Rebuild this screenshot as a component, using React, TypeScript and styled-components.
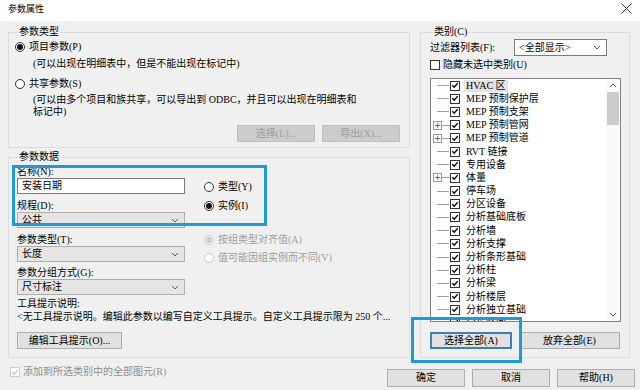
import styled, { createGlobalStyle } from 'styled-components'

const GlobalStyle = createGlobalStyle`
  html, body {
    margin: 0;
    padding: 0;
    background: #f0f0f0;
  }
  body {
    font-family: 'Liberation Serif', 'Noto Sans CJK SC', serif;
    font-size: 10px;
    line-height: 12px;
    color: #000;
  }
  * {
    box-sizing: border-box;
  }
`

interface TreeItem {
  label: string
  expand?: boolean
  selected?: boolean
}

const treeItems: TreeItem[] = [
  { label: 'HVAC 区', selected: true },
  { label: 'MEP 预制保护层' },
  { label: 'MEP 预制支架' },
  { label: 'MEP 预制管网', expand: true },
  { label: 'MEP 预制管道', expand: true },
  { label: 'RVT 链接' },
  { label: '专用设备' },
  { label: '体量', expand: true },
  { label: '停车场' },
  { label: '分区设备' },
  { label: '分析基础底板' },
  { label: '分析墙' },
  { label: '分析支撑' },
  { label: '分析条形基础' },
  { label: '分析柱' },
  { label: '分析梁' },
  { label: '分析楼层' },
  { label: '分析独立基础' },
  { label: '分析空间' },
]

const Chevron = ({ up }: { up?: boolean }) => (
  <svg width="8" height="5" viewBox="0 0 8 5">
    <polyline
      points={up ? '1,4 4,1 7,4' : '1,1 4,4 7,1'}
      fill="none"
      stroke="#606060"
      strokeWidth="1"
    />
  </svg>
)

const CheckMark = ({ color = '#000' }: { color?: string }) => (
  <svg width="9" height="9" viewBox="0 0 9 9">
    <polyline points="1.5,4.2 3.6,6.4 7.6,1.8" fill="none" stroke={color} strokeWidth="1.6" />
  </svg>
)

const Check = ({ checked, disabled }: { checked?: boolean; disabled?: boolean }) => (
  <CheckBox $disabled={disabled}>
    {checked && <CheckMark color={disabled ? '#c4c4c4' : '#000'} />}
  </CheckBox>
)

const Select = ({ value, white, width }: { value: string; white?: boolean; width?: number }) => (
  <SelectBox $white={white} style={width ? { width } : undefined}>
    <span>{value}</span>
    <Chevron />
  </SelectBox>
)

const App = () => (
  <Window>
    <GlobalStyle />
    <TitleBar>
      <Title>参数属性</Title>
      <svg width="11" height="11" viewBox="0 0 11 11">
        <path d="M0.5 0.5 L10.5 10.5 M10.5 0.5 L0.5 10.5" stroke="#333" strokeWidth="1" />
      </svg>
    </TitleBar>

    <Body>
      <LeftCol>
        <Group>
          <Legend>参数类型</Legend>
          <RadioRow $top={2}>
            <Radio $checked />
            项目参数(P)
          </RadioRow>
          <Note $top={4}>(可以出现在明细表中，但是不能出现在标记中)</Note>
          <RadioRow $top={7}>
            <Radio />
            共享参数(S)
          </RadioRow>
          <Note $top={3}>
            (可以由多个项目和族共享，可以导出到 ODBC，并且可以出现在明细表和
            <br />
            标记中)
          </Note>
          <ButtonRow>
            <Button disabled>选择(L)...</Button>
            <Button disabled>导出(X)...</Button>
          </ButtonRow>
        </Group>

        <DataGroup>
          <Legend>参数数据</Legend>
          <DataBody>
            <DataGrid>
              <Fields>
                <FieldBlock $top={3}>
                  <span>名称(N):</span>
                  <TextInput>安装日期</TextInput>
                </FieldBlock>
                <FieldBlock $top={6}>
                  <span>规程(D):</span>
                  <Select value="公共" />
                </FieldBlock>
                <FieldBlock $top={6}>
                  <span>参数类型(T):</span>
                  <Select value="长度" />
                </FieldBlock>
                <FieldBlock $top={5}>
                  <span>参数分组方式(G):</span>
                  <Select value="尺寸标注" />
                </FieldBlock>
              </Fields>
              <Options>
                <RadioRow $top={17}>
                  <Radio />
                  类型(Y)
                </RadioRow>
                <RadioRow $top={5}>
                  <Radio $checked />
                  实例(I)
                </RadioRow>
                <RadioRow $top={20} $disabled>
                  <Radio $checked $disabled />
                  按组类型对齐值(A)
                </RadioRow>
                <RadioRow $top={4} $disabled>
                  <Radio $disabled />
                  值可能因组实例而不同(V)
                </RadioRow>
              </Options>
            </DataGrid>
            <TipLabel>工具提示说明:</TipLabel>
            <TipText>
              &lt;无工具提示说明。编辑此参数以编写自定义工具提示。自定义工具提示限为 250 个...
            </TipText>
            <Button $width={105}>编辑工具提示(O)...</Button>
          </DataBody>
        </DataGroup>
      </LeftCol>

      <CategoryGroup>
        <Legend>类别(C)</Legend>
        <FilterRow>
          <span>过滤器列表(F):</span>
          <Select value="<全部显示>" white width={93} />
        </FilterRow>
        <CheckRow $top={3}>
          <Check />
          隐藏未选中类别(U)
        </CheckRow>
        <TreeBox>
          <TreeList>
            {treeItems.map((item) => (
              <TreeRow key={item.label}>
                <Connector>
                  {item.expand ? (
                    <>
                      <Expander>+</Expander>
                      <Line $width={8} />
                    </>
                  ) : (
                    <Line $width={12} $left={4} />
                  )}
                </Connector>
                <Check checked />
                <TreeLabel $selected={item.selected}>{item.label}</TreeLabel>
              </TreeRow>
            ))}
          </TreeList>
          <ScrollBar>
            <ScrollArrow>
              <Chevron up />
            </ScrollArrow>
            <Thumb />
            <Track />
            <ScrollArrow>
              <Chevron />
            </ScrollArrow>
          </ScrollBar>
        </TreeBox>
        <ListButtons>
          <Button $width={82} $focused>
            选择全部(A)
          </Button>
          <Button $width={101}>放弃全部(E)</Button>
        </ListButtons>
      </CategoryGroup>
    </Body>

    <Footer>
      <CheckRow $top={0} $disabled>
        <Check checked disabled />
        添加到所选类别中的全部图元(R)
      </CheckRow>
      <FooterButtons>
        <Button $width={78} $height={18}>
          确定
        </Button>
        <Button $width={78} $height={18}>
          取消
        </Button>
        <Button $width={78} $height={18}>
          帮助(H)
        </Button>
      </FooterButtons>
    </Footer>

    <Highlight style={{ left: 12, top: 165, width: 255, height: 61 }} />
    <Highlight style={{ left: 411, top: 317, width: 111, height: 46 }} />
  </Window>
)

const Window = styled.div`
  position: relative;
  width: 640px;
  height: 390px;
  overflow: hidden;
  display: flex;
  flex-direction: column;
  background: #f0f0f0;
`

const TitleBar = styled.div`
  height: 21px;
  flex: none;
  display: flex;
  align-items: center;
  justify-content: space-between;
  padding: 0 8px 4px 8px;
  background: #fff;
`

const Title = styled.span`
  font-family: 'Noto Sans CJK SC', sans-serif;
  font-size: 9px;
  color: #000;
`

const Body = styled.div`
  height: 337px;
  flex: none;
  display: flex;
  gap: 10px;
  padding: 5px 10px 0 8px;
`

const LeftCol = styled.div`
  width: 402px;
  display: flex;
  flex-direction: column;
  gap: 3px;
`

const Group = styled.fieldset`
  margin: 0;
  min-width: 0;
  padding: 0 9px 5px 6px;
  border: 1px solid #dcdcdc;
`

const DataGroup = styled(Group)`
  flex: 1;
  padding-bottom: 6px;
`

const CategoryGroup = styled(Group)`
  flex: 1;
  padding: 0 8px 8px 9px;
`

const Legend = styled.legend`
  padding: 0 1px;
  margin-left: 3px;
  line-height: 12px;
`

const RadioRow = styled.div<{ $top: number; $disabled?: boolean }>`
  display: flex;
  align-items: center;
  gap: 4px;
  height: 14px;
  margin-top: ${({ $top }) => $top}px;
  color: ${({ $disabled }) => ($disabled ? '#9d9d9d' : '#000')};
  white-space: nowrap;
`

const Radio = styled.span<{ $checked?: boolean; $disabled?: boolean }>`
  flex: none;
  width: 10px;
  height: 10px;
  border-radius: 50%;
  border: 1px solid ${({ $disabled }) => ($disabled ? '#cbcbcb' : '#333')};
  background: #fff;
  display: flex;
  align-items: center;
  justify-content: center;
  &::after {
    content: '';
    width: 6px;
    height: 6px;
    border-radius: 50%;
    background: ${({ $disabled }) => ($disabled ? '#cbcbcb' : '#111')};
    display: ${({ $checked }) => ($checked ? 'block' : 'none')};
  }
`

const Note = styled.div<{ $top: number }>`
  padding-left: 18px;
  margin-top: ${({ $top }) => $top}px;
  white-space: nowrap;
`

const ButtonRow = styled.div`
  display: flex;
  justify-content: flex-end;
  gap: 7px;
  margin-top: 7px;
`

const Button = styled.button<{ $width?: number; $height?: number; $focused?: boolean }>`
  width: ${({ $width }) => $width ?? 78}px;
  height: ${({ $height }) => $height ?? 17}px;
  padding: 0;
  margin: 0;
  font: inherit;
  color: #000;
  background: #e1e1e1;
  border: 1px solid #adadad;
  border-radius: 0;
  display: flex;
  align-items: center;
  justify-content: center;
  white-space: nowrap;
  ${({ $focused }) => $focused && 'border: 2px solid #3d7fb8;'}
  &:disabled {
    background: #cccccc;
    border-color: #bfbfbf;
    color: #9c9c9c;
  }
`

const DataBody = styled.div`
  padding-left: 2px;
`

const DataGrid = styled.div`
  display: grid;
  grid-template-columns: 168px 1fr;
  column-gap: 19px;
`

const Fields = styled.div`
  display: flex;
  flex-direction: column;
`

const FieldBlock = styled.div<{ $top: number }>`
  display: flex;
  flex-direction: column;
  margin-top: ${({ $top }) => $top}px;
`

const TextInput = styled.div`
  height: 16px;
  border: 1px solid #7a7a7a;
  background: #fff;
  padding: 0 4px;
  display: flex;
  align-items: center;
`

const SelectBox = styled.div<{ $white?: boolean }>`
  height: ${({ $white }) => ($white ? 17 : 16)}px;
  border: 1px solid ${({ $white }) => ($white ? '#7a7a7a' : '#adadad')};
  background: ${({ $white }) => ($white ? '#fff' : '#e5e5e5')};
  padding: 0 5px 0 4px;
  display: flex;
  align-items: center;
  justify-content: space-between;
  white-space: nowrap;
`

const Options = styled.div`
  display: flex;
  flex-direction: column;
`

const TipLabel = styled.div`
  margin-top: 3px;
`

const TipText = styled.div`
  margin-top: 1px;
  margin-bottom: 9px;
  white-space: nowrap;
`

const FilterRow = styled.div`
  display: flex;
  align-items: center;
  justify-content: space-between;
  height: 17px;
  margin-top: 1px;
  padding-right: 14px;
`

const CheckRow = styled.div<{ $top: number; $disabled?: boolean }>`
  display: flex;
  align-items: center;
  gap: 3px;
  height: 12px;
  margin-top: ${({ $top }) => $top}px;
  color: ${({ $disabled }) => ($disabled ? '#8f8f8f' : '#000')};
  white-space: nowrap;
`

const CheckBox = styled.span<{ $disabled?: boolean }>`
  flex: none;
  width: 10px;
  height: 10px;
  border: 1px solid ${({ $disabled }) => ($disabled ? '#cbcbcb' : '#333')};
  background: #fff;
  display: flex;
  align-items: center;
  justify-content: center;
`

const TreeBox = styled.div`
  display: flex;
  height: 244px;
  margin-top: 7px;
  border: 1px solid #828282;
  background: #fff;
  overflow: hidden;
`

const TreeList = styled.div`
  flex: 1;
  overflow: hidden;
  padding-left: 2px;
`

const TreeRow = styled.div`
  display: flex;
  align-items: center;
  height: 13.2px;
  white-space: nowrap;
`

const Connector = styled.span`
  position: relative;
  display: flex;
  align-items: center;
  width: 17px;
  height: 100%;
  flex: none;
`

const Line = styled.span<{ $width: number; $left?: number }>`
  display: block;
  width: ${({ $width }) => $width}px;
  margin-left: ${({ $left }) => $left ?? 0}px;
  border-top: 1px solid #a0a0a0;
`

const Expander = styled.span`
  width: 9px;
  height: 9px;
  border: 1px solid #9a9a9a;
  font-family: 'DejaVu Sans', sans-serif;
  font-size: 8px;
  line-height: 7px;
  color: #444;
  display: flex;
  align-items: center;
  justify-content: center;
`

const TreeLabel = styled.span<{ $selected?: boolean }>`
  margin-left: 4px;
  padding: 0 2px;
  line-height: 12px;
  background: ${({ $selected }) => ($selected ? '#e3e3e3' : 'transparent')};
`

const ScrollBar = styled.div`
  width: 14px;
  flex: none;
  display: flex;
  flex-direction: column;
  align-items: center;
  background: #fafafa;
`

const ScrollArrow = styled.div`
  height: 13px;
  width: 14px;
  display: flex;
  align-items: center;
  justify-content: center;
`

const Thumb = styled.div`
  width: 12px;
  height: 33px;
  background: #cdcdcd;
`

const Track = styled.div`
  flex: 1;
`

const ListButtons = styled.div`
  display: flex;
  justify-content: space-between;
  margin-top: 10px;
  padding-right: 1px;
`

const Footer = styled.div`
  flex: 1;
  display: flex;
  justify-content: space-between;
  align-items: flex-start;
  padding: 8px 5px 0 10px;
`

const FooterButtons = styled.div`
  display: flex;
  gap: 7px;
  margin-top: 3px;
`

const Highlight = styled.div`
  position: absolute;
  border: 3px solid #1e9bd7;
  pointer-events: none;
`

export default App
